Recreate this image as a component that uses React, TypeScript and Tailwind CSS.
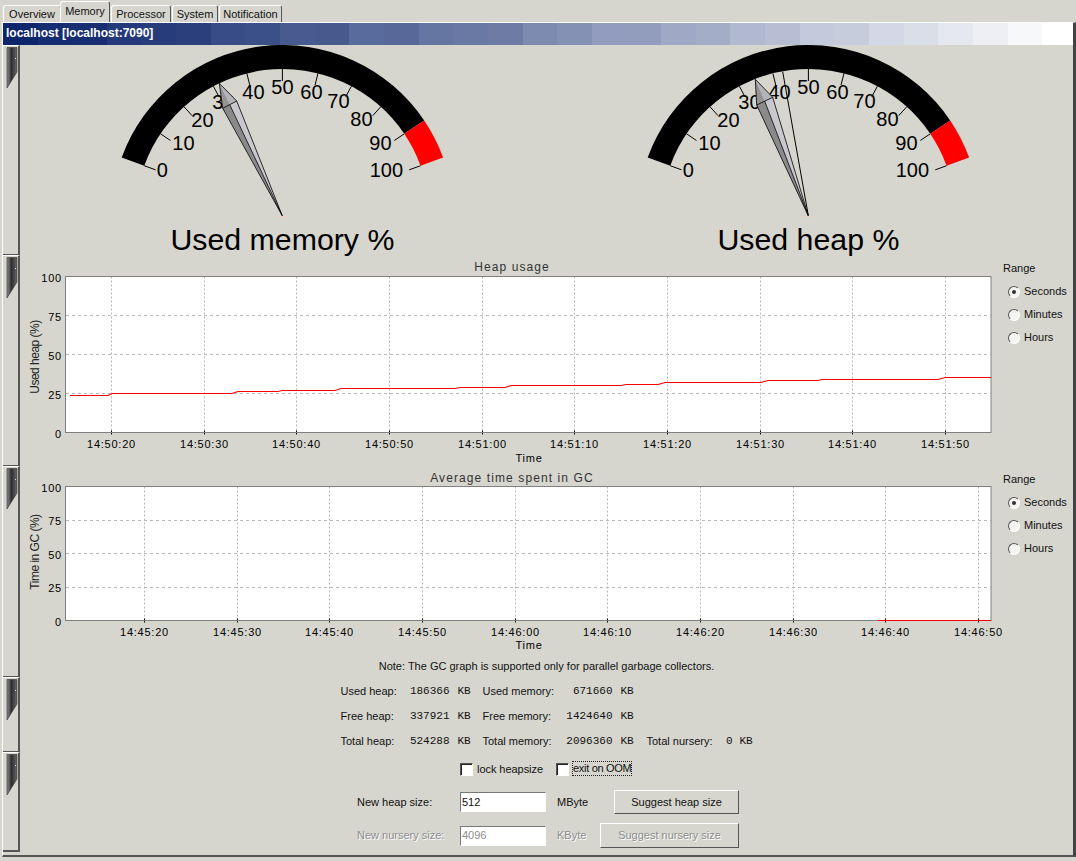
const PANEL = "bg-[#d6d6ce]";

// title bar is a stepped gradient, a little uneven like the original
const jitter = [0, 3, -2, 4, 1, -3, 5, 0, 6, -4, 8, -2, 5, 0, -5, 4, 2, 7, -3, 4, -2, 5, 0, 6, -3, 4, 0, 3, 1, 2, 0];
const bands = jitter.map((j, i) => {
  const t = Math.pow(Math.min(1, i / 30), 1.15);
  const mix = (a: number) => Math.min(255, Math.round(a + (255 - a) * t + j * (1 - t / 2)));
  return { width: i === 30 ? 31 : 34.7, color: `rgb(${mix(14)},${mix(38)},${mix(108)})` };
});

function polar(cx: number, cy: number, r: number, deg: number) {
  const a = (deg * Math.PI) / 180;
  return [cx + r * Math.cos(a), cy - r * Math.sin(a)];
}

function sector(cx: number, cy: number, from: number, to: number) {
  const [a, b] = polar(cx, cy, 171, from);
  const [c, d] = polar(cx, cy, 171, to);
  const [e, f] = polar(cx, cy, 147, to);
  const [g, h] = polar(cx, cy, 147, from);
  return `M${a} ${b}A171 171 0 0 1 ${c} ${d}L${e} ${f}A147 147 0 0 0 ${g} ${h}Z`;
}

const gaugeLabels: [string, number, number][] = [
  ["0", -120, 170], ["10", -99, 143], ["20", -80, 120], ["30", -59, 102], ["40", -29, 92],
  ["50", 0, 87], ["60", 29, 92], ["70", 56, 101], ["80", 79, 119], ["90", 98, 143], ["100", 104, 170],
];

type GaugeProps = {
  x: number;
  title: string;
  tip: [number, number];
  left: [number, number];
  right: [number, number];
  peak?: [number, number];
};

function Gauge({ x, title, tip, left, right, peak }: GaugeProps) {
  const cx = x + 0.4;
  const cy = 216;
  const mid = [(left[0] + right[0]) / 2, (left[1] + right[1]) / 2];
  const pts = (...p: number[][]) => p.map((q) => q.join(",")).join(" ");
  return (
    <svg width={340} height={213} viewBox={`${x - 172} 45 340 213`} className="shrink-0">
      <path d={sector(cx, cy, 160, 34)} fill="#000" />
      <path d={sector(cx, cy, 34, 20)} fill="#f00" />
      {gaugeLabels.map((l, i) => {
        const deg = 160 - i * 14;
        const [x1, y1] = polar(cx, cy, 147, deg);
        const [x2, y2] = polar(cx, cy, 135, deg);
        return (
          <g key={l[0]}>
            <line x1={x1} y1={y1} x2={x2} y2={y2} stroke="#000" strokeWidth="1" />
            <text x={cx + l[1]} y={l[2] + 7} textAnchor="middle" fontSize="20" fill="#000">
              {l[0]}
            </text>
          </g>
        );
      })}
      {peak && <polyline points={pts([cx, cy], peak)} stroke="#000" strokeWidth="1" fill="none" />}
      <polygon points={pts(tip, left, [cx, cy], mid)} fill="#8a8a8a" />
      <polygon points={pts(tip, right, [cx, cy], mid)} fill="#c8c8ce" />
      <polygon points={pts(tip, left, mid)} fill="#949494" />
      <polygon points={pts(tip, mid, right)} fill="#b4b4b8" />
      <polygon points={pts(tip, left, [cx, cy], right)} fill="none" stroke="#000" strokeWidth="0.8" />
      <polyline points={pts(left, right)} fill="none" stroke="#000" strokeWidth="0.8" />
      <polyline points={pts(mid, [cx, cy])} fill="none" stroke="#000" strokeWidth="0.8" />
      <ellipse cx={cx} cy={216.5} rx={8} ry={0.7} fill="#e8cfc8" />
      <text x={cx} y={250} textAnchor="middle" fontSize="30.3" fill="#000">
        {title}
      </text>
    </svg>
  );
}

const yTicks = ["100", "75", "50", "25", "0"];

type ChartProps = {
  top: number;
  height: number;
  title: string;
  titleY: number;
  yLabel: string;
  yLabelY: number;
  plotTop: number;
  plotBottom: number;
  firstTick: number;
  times: string[];
  line: string;
  timeY: number;
};

function Chart({ top, height, title, titleY, yLabel, yLabelY, plotTop, plotBottom, firstTick, times, line, timeY }: ChartProps) {
  const step = (plotBottom - plotTop) / 4;
  return (
    <svg width={983} height={height} viewBox={`20 ${top} 983 ${height}`} overflow="visible" className="shrink-0">
      <text x={512} y={titleY} textAnchor="middle" fontSize="12" letterSpacing="1.1" fill="#333">
        {title}
      </text>
      <rect x={65.5} y={plotTop} width={925.5} height={plotBottom - plotTop} fill="#fff" />
      {[1, 2, 3].map((i) => {
        const y = Math.floor(plotTop + step * i) + 0.5;
        return <line key={i} x1={66} x2={991} y1={y} y2={y} stroke="#b8b8b8" strokeDasharray="3 3" />;
      })}
      {times.map((t, i) => {
        const x = Math.round(firstTick + i * 92.65) + 0.5;
        return (
          <g key={t}>
            <line x1={x} x2={x} y1={plotTop} y2={plotBottom} stroke="#b8b8b8" strokeDasharray="2 2" />
            <line x1={x} x2={x} y1={plotBottom - 2} y2={plotBottom + 2} stroke="#000" />
            <text x={x} y={plotBottom + 15} textAnchor="middle" fontSize="11" letterSpacing="0.75" fill="#000">
              {t}
            </text>
          </g>
        );
      })}
      <rect x={65.5} y={plotTop} width={925.5} height={plotBottom - plotTop} fill="none" stroke="#808080" />
      <polyline points={line} fill="none" stroke="#f00" strokeWidth="1.2" />
      {yTicks.map((t, i) => (
        <text key={t} x={62} y={plotTop + step * i + 5} textAnchor="end" fontSize="11" letterSpacing="0.8" fill="#000">
          {t}
        </text>
      ))}
      <text
        x={39}
        y={yLabelY}
        textAnchor="middle"
        fontSize="12"
        letterSpacing="-0.5"
        fill="#222"
        transform={`rotate(-90 39 ${yLabelY})`}
      >
        {yLabel}
      </text>
      <text x={529} y={timeY} textAnchor="middle" fontSize="11" letterSpacing="0.8" fill="#000">
        Time
      </text>
    </svg>
  );
}

function Radio({ label, checked }: { label: string; checked?: boolean }) {
  return (
    <div className="flex h-[23px] items-center pl-[5px]">
      <span className="flex h-3 w-3 items-center justify-center rounded-full border border-t-[#555] border-l-[#555] border-r-white border-b-white bg-[#f4f4f0]">
        {checked && <span className="h-1 w-1 rounded-full bg-[#333]" />}
      </span>
      <span className="ml-1 text-[11px] text-[#111]">{label}</span>
    </div>
  );
}

function RangePanel({ offset }: { offset: string }) {
  return (
    <div className="flex flex-col">
      <div className={`${offset} h-[19px] text-[11px] leading-[14px] text-[#111]`}>Range</div>
      <Radio label="Seconds" checked />
      <Radio label="Minutes" />
      <Radio label="Hours" />
    </div>
  );
}

function Grip() {
  return (
    <svg width="12" height="42" viewBox="0 0 12 42" className="ml-[3px] mt-px shrink-0">
      <defs>
        <linearGradient id="grip" x1="0" x2="1" y1="0" y2="0">
          <stop offset="0" stopColor="#8c8c8c" />
          <stop offset="0.45" stopColor="#2e2e2e" />
          <stop offset="1" stopColor="#6a6a6a" />
        </linearGradient>
      </defs>
      <path d="M1 0.5H11V25L1 41Z" fill="url(#grip)" stroke="#333" strokeWidth="0.6" />
      <path d="M9.5 11v1" stroke="#ddd" />
    </svg>
  );
}

function SideSection({ height, last }: { height: string; last?: boolean }) {
  return (
    <div className={`${height} border-r-2 border-r-[#555] ${last ? "border-b-2 border-b-[#555]" : "border-b border-b-[#555]"} border-t border-t-white`}>
      <Grip />
    </div>
  );
}

const stats: [string, string, string, string, string?, string?][] = [
  ["Used heap:", "186366", "Used memory:", "671660"],
  ["Free heap:", "337921", "Free memory:", "1424640"],
  ["Total heap:", "524288", "Total memory:", "2096360", "Total nursery:", "0"],
];

function Mono({ children }: { children: React.ReactNode }) {
  return <span className="text-right font-['Liberation_Mono',monospace] text-[11px] text-[#111]">{children}</span>;
}

function CheckBox() {
  return <span className="block h-[13px] w-[13px] shrink-0 border border-t-[#555] border-l-[#555] border-r-white border-b-white bg-white shadow-[inset_1px_1px_0_#222]" />;
}

const bevel = "border border-t-white border-l-white border-r-[#555] border-b-[#555]";
const field = "flex h-5 w-[86px] items-center border border-t-[#777] border-l-[#777] border-r-white border-b-white bg-white pl-px text-[11px]";
const disabledText = "text-[#8e8e8e] [text-shadow:1px_1px_0_#fff]";

const heapLine =
  "70,395.5 108,395.5 112,393.5 232,393.5 238,391.5 278,391.5 282,390.5 335,390.5 341,388.5 455,388.5 460,387.5 505,387.5 511,385.5 621,385.5 626,384.5 658,384.5 665,382.5 761,382.5 768,380.5 818,380.5 822,379.5 938,379.5 945,377.5 991,377.5";

export default function App() {
  return (
    <div className={`flex h-[861px] w-[1076px] flex-col overflow-hidden ${PANEL} font-['Liberation_Sans',Arial,sans-serif] text-black`}>
      {/* tabs */}
      <div className="flex h-[22px] items-end pl-[3px] text-[11px] text-[#111]">
        <div className={`flex h-[17px] w-[58px] items-center justify-center rounded-t-[3px] ${bevel} border-b-0`}>Overview</div>
        <div className={`-ml-px flex h-[21px] w-[50px] items-center justify-center rounded-t-[3px] pb-px ${bevel} border-b-0`}>Memory</div>
        <div className={`ml-px flex h-[17px] w-[60px] items-center justify-center rounded-t-[3px] ${bevel} border-b-0`}>Processor</div>
        <div className={`ml-px flex h-[17px] w-[46px] items-center justify-center rounded-t-[3px] ${bevel} border-b-0`}>System</div>
        <div className={`ml-px flex h-[17px] w-[63px] items-center justify-center rounded-t-[3px] ${bevel} border-b-0`}>Notification</div>
      </div>

      {/* panel */}
      <div className="ml-[2px] flex h-[835px] flex-col border-t border-l border-t-white border-l-white border-r-[3px] border-r-[#444] border-b-2 border-b-[#555]">
        <div className="relative flex h-[22px] shrink-0 bg-[#0e266c]">
          {bands.map((b, i) => (
            <div key={i} className="h-full" style={{ width: b.width, background: b.color }} />
          ))}
          <span className="absolute left-[3px] top-[3px] text-[12px] font-bold leading-[15px] text-white">localhost [localhost:7090]</span>
        </div>

        <div className="flex min-h-0 flex-1">
          <div className="flex w-[17px] shrink-0 flex-col">
            <SideSection height="h-[210px]" />
            <SideSection height="h-[211px]" />
            <SideSection height="h-[211px]" />
            <SideSection height="h-[75px]" />
            <SideSection height="h-[100px]" last />
          </div>

          <div className="flex min-w-0 flex-1 flex-col">
            <div className="flex h-[213px] shrink-0 pl-[90px]">
              <Gauge x={282} title="Used memory %" tip={[219.3, 83.3]} left={[222.7, 108.3]} right={[236.7, 101]} />
              <div className="w-[186px] shrink-0" />
              <Gauge x={808} title="Used heap %" tip={[755.3, 79.3]} left={[756.7, 105]} right={[772.7, 97.3]} peak={[782.7, 71.7]} />
            </div>

            <div className="flex h-[209px] shrink-0">
              <Chart
                top={258}
                height={209}
                title="Heap usage"
                titleY={271}
                yLabel="Used heap (%)"
                yLabelY={357}
                plotTop={276.5}
                plotBottom={432.5}
                firstTick={111}
                times={["14:50:20", "14:50:30", "14:50:40", "14:50:50", "14:51:00", "14:51:10", "14:51:20", "14:51:30", "14:51:40", "14:51:50"]}
                line={heapLine}
                timeY={462}
              />
              <RangePanel offset="mt-[3px]" />
            </div>

            <div className="flex h-[189px] shrink-0">
              <Chart
                top={467}
                height={189}
                title="Average time spent in GC"
                titleY={482}
                yLabel="Time in GC (%)"
                yLabelY={552}
                plotTop={486.5}
                plotBottom={620.5}
                firstTick={144}
                times={["14:45:20", "14:45:30", "14:45:40", "14:45:50", "14:46:00", "14:46:10", "14:46:20", "14:46:30", "14:46:40", "14:46:50"]}
                line="878,620.5 991,620.5"
                timeY={649}
              />
              <RangePanel offset="mt-[5px]" />
            </div>

            <div className="flex h-[23px] shrink-0 items-center justify-center pb-[2px] text-[11px] text-[#111]">
              Note: The GC graph is supported only for parallel garbage collectors.
            </div>

            <div className="grid w-[412px] shrink-0 grid-cols-[55px_54px_21px_12px_75px_55px_21px_13px_66px_20px_20px] auto-rows-[25px] items-center self-center whitespace-nowrap text-[11px] text-[#111]">
              {stats.map((s) => (
                <div key={s[0]} className="contents">
                  <span>{s[0]}</span>
                  <Mono>{s[1]}</Mono>
                  <span className="pl-2 font-['Liberation_Mono',monospace]">KB</span>
                  <span />
                  <span>{s[2]}</span>
                  <Mono>{s[3]}</Mono>
                  <span className="pl-2 font-['Liberation_Mono',monospace]">KB</span>
                  <span />
                  {s[4] ? <span>{s[4]}</span> : <span />}
                  {s[5] ? <Mono>{s[5]}</Mono> : <span />}
                  {s[5] ? <span className="pl-[7px] font-['Liberation_Mono',monospace]">KB</span> : <span />}
                </div>
              ))}
            </div>

            <div className="flex h-[30px] shrink-0 items-center pl-[440px] text-[11px] text-[#111]">
              <CheckBox />
              <span className="ml-[4px] whitespace-nowrap tracking-[-0.05px]">lock heapsize</span>
              <span className="ml-[13px]"><CheckBox /></span>
              <span className="-mt-px ml-[3px] whitespace-nowrap border border-dotted border-[#222] leading-[13px] tracking-[-0.3px]">exit on OOM</span>
            </div>

            <div className="ml-[337px] mt-[6px] flex h-6 w-[382px] shrink-0 items-center text-[11px] text-[#111]">
              <span className="w-[103px]">New heap size:</span>
              <span className={field}>512</span>
              <span className="ml-[11px]">MByte</span>
              <button className={`ml-auto h-6 w-[125px] ${bevel} text-[11px] text-[#111]`}>Suggest heap size</button>
            </div>

            <div className={`ml-[337px] mt-[9px] flex h-[25px] w-[382px] shrink-0 items-center text-[11px] ${disabledText}`}>
              <span className="w-[103px]">New nursery size:</span>
              <span className={field}>4096</span>
              <span className="ml-[11px]">KByte</span>
              <button className={`ml-auto h-[25px] w-[139px] ${bevel} text-[11px] ${disabledText}`}>Suggest nursery size</button>
            </div>
          </div>
        </div>
      </div>
    </div>
  );
}
